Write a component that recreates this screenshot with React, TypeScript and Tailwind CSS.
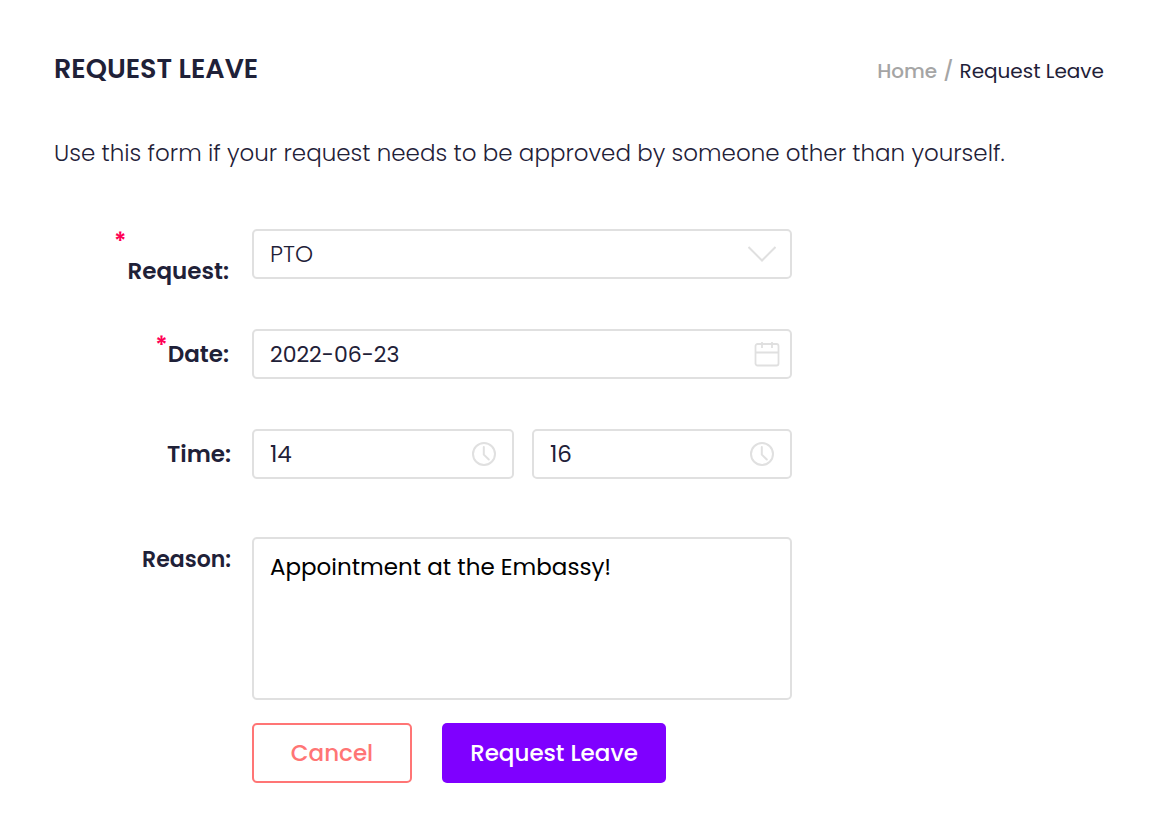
import React, { useState } from "react";

const label = "text-right leading-8 font-semibold text-[#1f2138]";
const field =
  "w-full rounded-[5px] border-2 border-[#e0e0e0] bg-white pl-4 text-[#1f2138] outline-none focus:border-[#7f00ff]";
const icon = "pointer-events-none absolute inset-y-0 my-auto text-[#e0e0e0]";

function ClockIcon() {
  return (
    <svg
      className={`${icon} right-4 size-7`}
      viewBox="0 0 28 28"
      fill="none"
      stroke="currentColor"
      strokeWidth="2"
      strokeLinecap="round"
      strokeLinejoin="round"
      aria-hidden="true"
    >
      <circle cx="14" cy="14" r="11" />
      <path d="M13.8 7v7.6l5 4.9" />
    </svg>
  );
}

function CalendarIcon() {
  return (
    <svg
      className={`${icon} right-3 size-[26px]`}
      viewBox="0 0 26 26"
      fill="none"
      stroke="currentColor"
      strokeWidth="1.8"
      aria-hidden="true"
    >
      <rect x="1.5" y="3" width="23" height="21.5" rx="2" />
      <path d="M1.5 11.5h23M8 1v6M18 1v6" />
    </svg>
  );
}

function ChevronIcon() {
  return (
    <svg
      className={`${icon} right-4 h-4 w-7`}
      viewBox="0 0 28 16"
      fill="none"
      stroke="currentColor"
      strokeWidth="2"
      aria-hidden="true"
    >
      <path d="M0.5 1 14 14.5 27.5 1" />
    </svg>
  );
}

export default function App() {
  const [request, setRequest] = useState("PTO");
  const [date, setDate] = useState("2022-06-23");
  const [from, setFrom] = useState("14");
  const [to, setTo] = useState("16");
  const [reason, setReason] = useState("Appointment at the Embassy!");

  return (
    <main className="min-h-screen bg-white px-[54px] pt-[49px] pb-12 font-[Poppins,Inter,sans-serif] text-[#1f2138]">
      <header className="flex items-center justify-between">
        <h1 className="text-[27px] leading-9 font-semibold">REQUEST LEAVE</h1>
        <nav aria-label="Breadcrumb" className="flex gap-1.5 pt-1 pr-0.5 text-xl leading-9">
          <a href="#home" className="font-medium text-[#a5a5a5]">Home</a>
          <span className="font-medium text-[#a5a5a5]">/</span>
          <span>Request Leave</span>
        </nav>
      </header>

      <p className="mt-[46px] text-[23px] leading-9 font-light">
        Use this form if your request needs to be approved by someone other than yourself.
      </p>

      <form
        onSubmit={(e) => e.preventDefault()}
        className="mt-[58px] grid grid-cols-[177px_minmax(0,540px)] gap-x-[21px]"
      >
        <label htmlFor="request" className={`${label} flex flex-col pr-0.5 text-[23px]`}>
          <span className="self-start pl-[60px] text-2xl leading-[26px] text-[#ff0055]">*</span>
          <span>Request:</span>
        </label>
        <div className="relative mb-[50px] h-[50px]">
          <select
            id="request"
            value={request}
            onChange={(e) => setRequest(e.target.value)}
            className={`${field} h-[50px] appearance-none text-[23px] font-light`}
          >
            <option>PTO</option>
          </select>
          <ChevronIcon />
        </div>

        <label htmlFor="date" className={`${label} flex justify-end pt-[9px] pr-0.5 text-[23px]`}>
          <span className="text-2xl leading-4 text-[#ff0055]">*</span>
          <span>Date:</span>
        </label>
        <div className="relative mb-[50px] h-[50px]">
          <input
            id="date"
            type="text"
            value={date}
            onChange={(e) => setDate(e.target.value)}
            className={`${field} h-[50px] text-[22px]`}
          />
          <CalendarIcon />
        </div>

        <label htmlFor="from" className={`${label} pt-[9px] text-[23px]`}>Time:</label>
        <div className="mb-[58px] grid grid-cols-[262fr_260fr] gap-[18px]">
          <div className="relative">
            <input
              id="from"
              type="text"
              value={from}
              onChange={(e) => setFrom(e.target.value)}
              className={`${field} h-[50px] text-[23px]`}
            />
            <ClockIcon />
          </div>
          <div className="relative">
            <input
              id="to"
              type="text"
              aria-label="End time"
              value={to}
              onChange={(e) => setTo(e.target.value)}
              className={`${field} h-[50px] text-[23px]`}
            />
            <ClockIcon />
          </div>
        </div>

        <label htmlFor="reason" className={`${label} pt-[7px] text-[22px]`}>Reason:</label>
        <textarea
          id="reason"
          rows={4}
          value={reason}
          onChange={(e) => setReason(e.target.value)}
          className={`${field} block resize-none pt-3 pb-[19px] text-[23px] leading-8 text-black`}
        />

        <div className="col-start-2 mt-[23px] flex gap-[30px]">
          <button
            type="button"
            className="h-[60px] w-40 rounded-[5px] border-2 border-[#ff7575] text-[23px] font-medium text-[#ff7575]"
          >
            Cancel
          </button>
          <button
            type="submit"
            className="h-[60px] w-56 rounded-[5px] bg-[#7f00ff] text-[23px] font-medium text-white"
          >
            Request Leave
          </button>
        </div>
      </form>
    </main>
  );
}
